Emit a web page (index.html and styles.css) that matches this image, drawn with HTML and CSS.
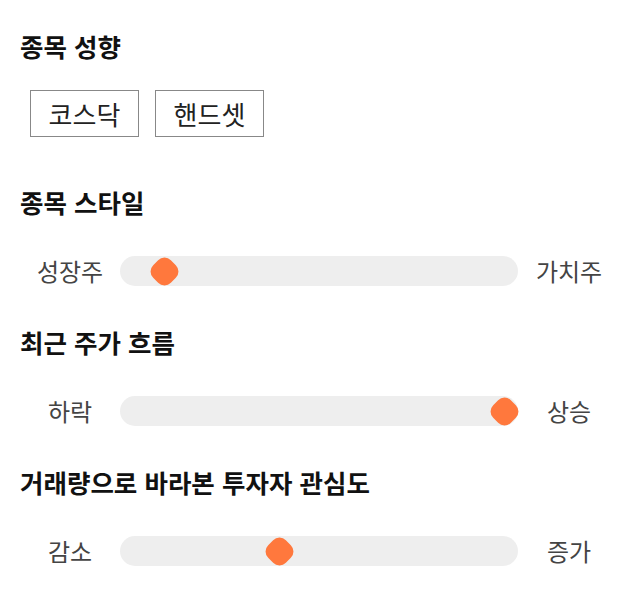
FILE: index.html
```html
<!DOCTYPE html>
<html lang="ko">
<head>
<meta charset="utf-8">
<link rel="stylesheet" href="styles.css">
</head>
<body>
<div class="page">
  <section class="section section-type">
    <h2 class="title">종목 성향</h2>
    <div class="chips">
      <button class="chip">코스닥</button>
      <button class="chip">핸드셋</button>
    </div>
  </section>

  <section class="section">
    <h2 class="title">종목 스타일</h2>
    <div class="slider-row">
      <span class="label">성장주</span>
      <div class="track"><span class="thumb" style="left: calc(11.3% - 12.5px)"></span></div>
      <span class="label">가치주</span>
    </div>
  </section>

  <section class="section">
    <h2 class="title">최근 주가 흐름</h2>
    <div class="slider-row">
      <span class="label">하락</span>
      <div class="track"><span class="thumb" style="left: calc(96.7% - 12.5px)"></span></div>
      <span class="label">상승</span>
    </div>
  </section>

  <section class="section">
    <h2 class="title">거래량으로 바라본 투자자 관심도</h2>
    <div class="slider-row">
      <span class="label">감소</span>
      <div class="track"><span class="thumb" style="left: calc(40% - 12.5px)"></span></div>
      <span class="label">증가</span>
    </div>
  </section>
</div>
</body>
</html>
```

FILE: styles.css
```css
* { box-sizing: border-box; }

html, body {
  margin: 0;
  padding: 0;
  background: #ffffff;
}

body {
  font-family: "Noto Sans CJK KR", "Noto Sans", sans-serif;
  color: #111;
}

.page {
  padding: 30px 20px 0 20px;
  width: 640px;
}

.section {
  display: flex;
  flex-direction: column;
}

.section + .section {
  margin-top: 40px;
}

.section-type + .section {
  margin-top: 49px;
}

.title {
  margin: 0;
  font-size: 25.5px;
  font-weight: 700;
  line-height: 32px;
  height: 32px;
  color: #111;
  letter-spacing: 0;
}

.chips {
  display: flex;
  gap: 16px;
  padding-left: 10px;
  margin-top: 28px;
}

.chip {
  width: 109px;
  height: 47px;
  border: 1px solid #888;
  background: #fff;
  font-family: inherit;
  font-size: 26px;
  color: #222;
  padding: 0;
  line-height: 45px;
  border-radius: 0;
}

.slider-row {
  display: grid;
  grid-template-columns: 100px 398px 1fr;
  align-items: center;
  margin-top: 38px;
  height: 30px;
}

.label {
  text-align: center;
  font-size: 24px;
  line-height: 30px;
  color: #444;
}

.track {
  position: relative;
  height: 30px;
  background: #eeeeee;
  border-radius: 15px;
}

.thumb {
  position: absolute;
  top: 2.5px;
  width: 25px;
  height: 25px;
  background: #ff783d;
  border-radius: 9px;
  transform: rotate(45deg);
}
```
